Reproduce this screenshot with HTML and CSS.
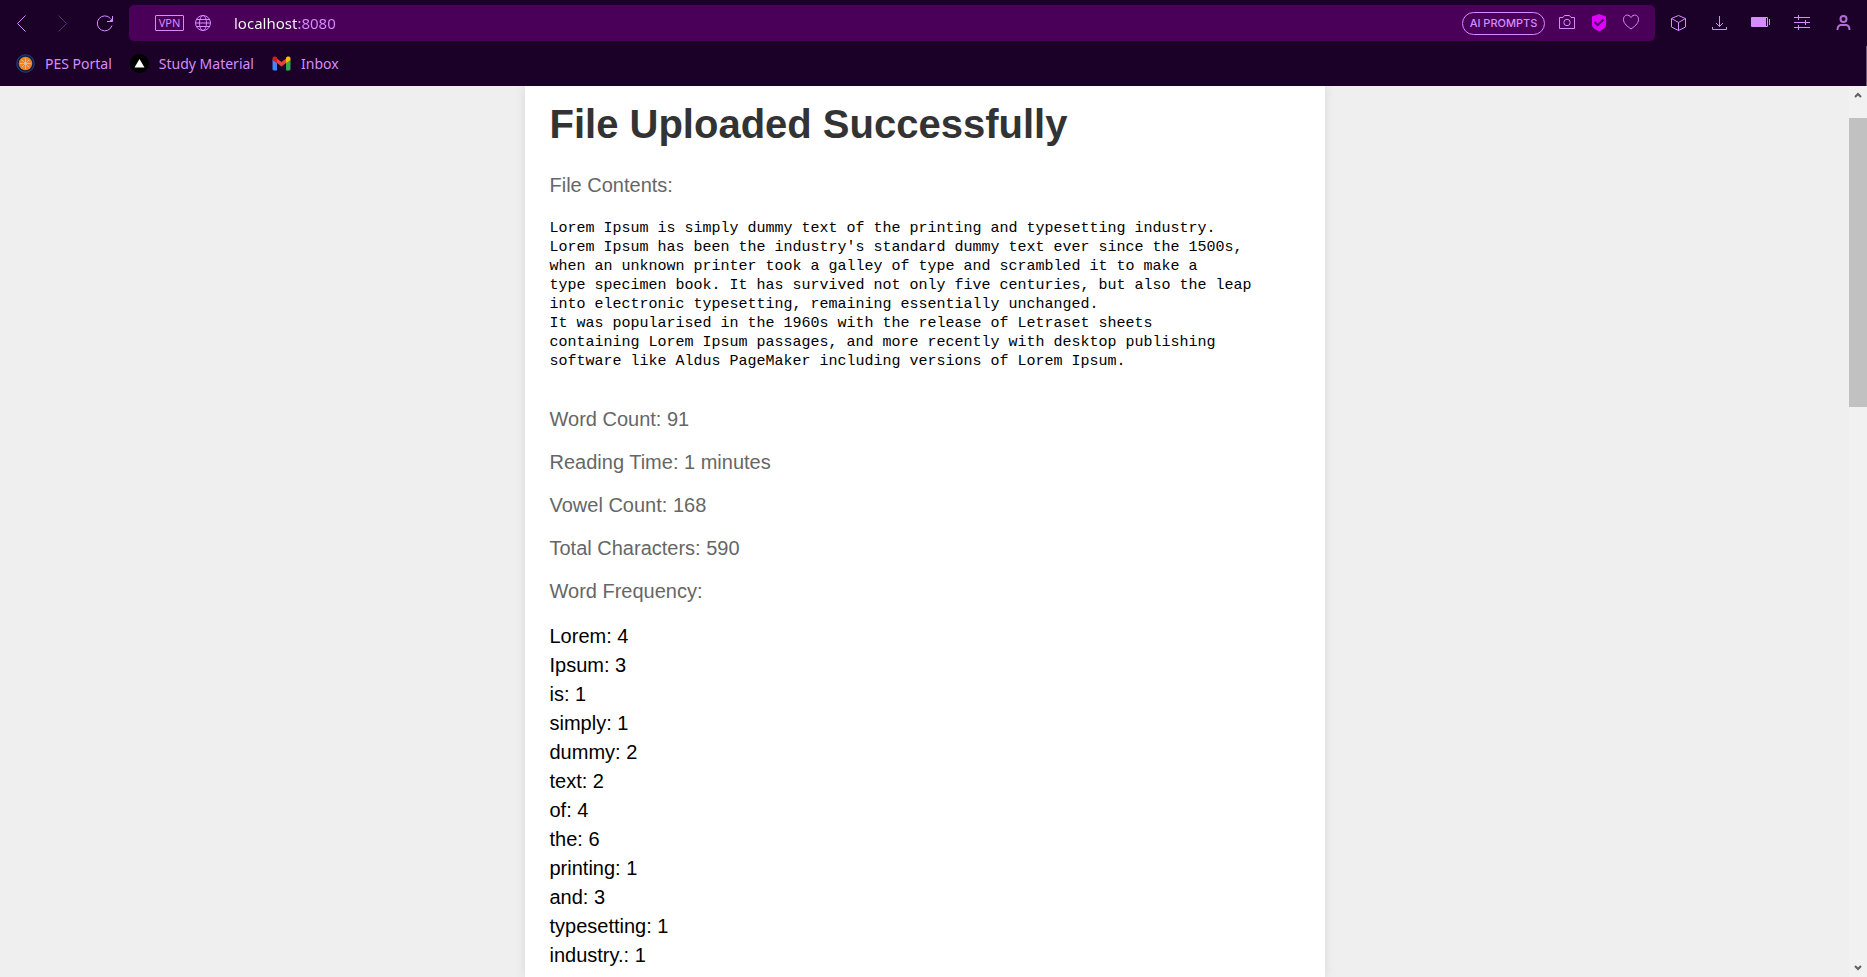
FILE: index.html
```html
<!DOCTYPE html>
<html lang="en">
<head>
<meta charset="utf-8">
<meta name="viewport" content="width=device-width, initial-scale=1">
<title>File Uploaded Successfully</title>
<link rel="stylesheet" href="styles.css">
</head>
<body>
<header class="browser">
  <div class="toolbar">
    <nav class="history" aria-label="History">
      <button class="icon-button" type="button" aria-label="Back"><svg viewBox="0 0 20 20"><path d="M14.5 2.500 6.500 10.500l8 8"/></svg></button>
      <button class="icon-button faded" type="button" aria-label="Forward"><svg viewBox="0 0 20 20"><path d="m5.500 2.500 8 8-8 8"/></svg></button>
      <button class="icon-button" type="button" aria-label="Reload"><svg viewBox="0 0 20 20"><path d="M17 12.500A7.500 7.500 0 1 1 15.500 5.500M17.500 3v5.500H12"/><path class="solid" d="M17.500 5v3.500H14z"/></svg></button>
    </nav>
    <div class="address">
      <button class="vpn" type="button">VPN</button>
      <button class="icon-button" type="button" aria-label="Site information"><svg viewBox="0 0 20 20"><circle cx="10" cy="10" r="7.500"/><ellipse cx="10" cy="10" rx="3.500" ry="7.500"/><path d="M3.500 6.500h13M2.500 10h15M3.500 13.500h13"/></svg></button>
      <input class="url" type="text" aria-label="Address" value="localhost:8080">
      <div class="address-tools">
        <button class="prompts" type="button">AI PROMPTS</button>
        <button class="icon-button" type="button" aria-label="Snapshot"><svg viewBox="0 0 20 20"><path d="M2.500 4.500H6L7.500 2.500h5L14 4.500h3.500v11h-15z"/><circle cx="10" cy="9.500" r="3.200"/></svg></button>
        <button class="icon-button" type="button" aria-label="Ad blocker"><svg viewBox="0 0 20 20"><path class="shield" d="m10 1 7 2.500v8.500q0 3-7 6.500-7-3.500-7-6.500V3.500z"/><path class="check" d="m5.500 9 3.200 3.200L14.500 6.500"/></svg></button>
        <button class="icon-button" type="button" aria-label="Add to bookmarks"><svg viewBox="0 0 20 20"><path d="M10 4.500C8 .8 2.500 1.300 2.500 6.500c0 4.300 4.500 7.300 7.500 9.500 3-2.200 7.500-5.200 7.500-9.500C17.500 1.300 12 .8 10 4.500z"/></svg></button>
      </div>
    </div>
    <div class="tools">
      <button class="icon-button" type="button" aria-label="Extensions"><svg viewBox="0 0 20 20"><path d="m9.500 2.500 7 3v8.500l-7 3.500-7-3.500V5.500zM2.500 5.500l7 4 7-4M9.500 9.500v8"/></svg></button>
      <button class="icon-button" type="button" aria-label="Downloads"><svg viewBox="0 0 20 20"><path d="M9.500 3v10.500M6 10l3.500 3.500L13 10M2.500 14v2.500h14V14"/></svg></button>
      <button class="icon-button" type="button" aria-label="Battery"><svg viewBox="0 0 20 20"><path class="solid" d="M1 4h14v10H1a1 1 0 0 1-1-1V5a1 1 0 0 1 1-1z"/><path d="M1 4.500h15.500v9H1M18.500 6v6"/></svg></button>
      <button class="icon-button" type="button" aria-label="Easy setup"><svg viewBox="0 0 20 20"><path d="M2 4.500h16M2 9.500h16M2 14.500h16M6.500 2v5M13.500 7v5M6.500 12v5"/></svg></button>
      <button class="icon-button" type="button" aria-label="Profile"><svg class="profile" viewBox="0 0 20 20"><circle cx="10.500" cy="6" r="3"/><path d="M4.500 17c0-2.500 1-4.500 3-5h6c2 .5 3 2.500 3 5"/></svg></button>
    </div>
  </div>
  <nav class="bookmarks" aria-label="Bookmarks">
    <a class="bookmark" href="#pes"><svg viewBox="0 0 19 19"><circle cx="9.500" cy="9.500" r="8.800" fill="#171b3c" stroke="#21437a"/><circle cx="9.500" cy="9.500" r="6.700" fill="#f58220"/><circle cx="9.500" cy="9.500" r="2.700" fill="#7d91b8"/><path d="M9.500 4v11M4 9.500h11M5.600 5.600l7.800 7.800M13.400 5.600l-7.800 7.800" stroke="#e8b88a"/></svg>PES Portal</a>
    <a class="bookmark" href="#study"><svg viewBox="0 0 19 19"><circle cx="9.500" cy="9.500" r="9.500" fill="#000"/><path d="m9.500 5 5 8.500h-10z" fill="#fff"/></svg>Study Material</a>
    <a class="bookmark" href="#inbox"><svg viewBox="0 0 19 19"><path d="M.5 5.500 5 8.500V16.500H2A1.500 1.500 0 0 1 .5 15z" fill="#4285f4"/><path d="M18.500 5.500 14 8.500V16.500h3a1.500 1.500 0 0 0 1.500-1.500z" fill="#34a853"/><path d="M5 4.500 9.500 8 14 4.500v4.500l-4.500 3.500L5 9z" fill="#ea4335"/><path d="M.5 6V4.500C.5 2.500 3 2 4.200 3L5 3.600V9z" fill="#c5221f"/><path d="M18.500 6V4.500C18.500 2.500 16 2 14.800 3l-.8.6V9z" fill="#fbbc04"/></svg>Inbox</a>
  </nav>
</header>
<div class="window">
  <main class="page">
    <article class="card">
      <h1 class="title">File Uploaded Successfully</h1>
      <p class="stat">File Contents:</p>
      <pre class="contents">Lorem Ipsum is simply dummy text of the printing and typesetting industry.
Lorem Ipsum has been the industry's standard dummy text ever since the 1500s,
when an unknown printer took a galley of type and scrambled it to make a
type specimen book. It has survived not only five centuries, but also the leap
into electronic typesetting, remaining essentially unchanged.
It was popularised in the 1960s with the release of Letraset sheets
containing Lorem Ipsum passages, and more recently with desktop publishing
software like Aldus PageMaker including versions of Lorem Ipsum.</pre>
      <p class="stat">Word Count: 91</p>
      <p class="stat">Reading Time: 1 minutes</p>
      <p class="stat">Vowel Count: 168</p>
      <p class="stat">Total Characters: 590</p>
      <p class="stat">Word Frequency:</p>
      <ul class="words">
        <li>Lorem: 4</li>
        <li>Ipsum: 3</li>
        <li>is: 1</li>
        <li>simply: 1</li>
        <li>dummy: 2</li>
        <li>text: 2</li>
        <li>of: 4</li>
        <li>the: 6</li>
        <li>printing: 1</li>
        <li>and: 3</li>
        <li>typesetting: 1</li>
        <li>industry.: 1</li>
      </ul>
    </article>
  </main>
  <div class="scrollbar">
    <button class="arrow" type="button" aria-label="Scroll up"><svg viewBox="0 0 8 6"><path d="m1 5 3-3 3 3"/></svg></button>
    <div class="track"><div class="thumb"></div></div>
    <button class="arrow" type="button" aria-label="Scroll down"><svg viewBox="0 0 8 6"><path d="m1 1 3 3 3-3"/></svg></button>
  </div>
</div>
</body>
</html>
```
FILE: styles.css
```css
* {
  box-sizing: border-box;
}

body {
  display: flex;
  flex-direction: column;
  height: 100vh;
  margin: 0;
  overflow: hidden;
  font-family: "Liberation Sans", Arial, sans-serif;
}

button {
  flex: none;
  padding: 0;
  border: 0;
  background: none;
  color: #d68cff;
}

/* Browser bars */
.browser {
  flex: none;
  background: #1b0027;
  font-family: "Noto Sans", "Open Sans", sans-serif;
  font-size: 14px;
}

.toolbar {
  display: flex;
  align-items: center;
  gap: 14px;
  padding: 5px 14px 5px 11px;
}

.history {
  display: flex;
  gap: 22px;
}

.tools {
  display: flex;
  gap: 21px;
}

.icon-button {
  width: 20px;
  height: 20px;
}

.icon-button svg {
  display: block;
  width: 20px;
  height: 20px;
  overflow: visible;
  fill: none;
  stroke: #d68cff;
}

.icon-button .solid {
  fill: #d68cff;
  stroke: none;
}

.icon-button .shield {
  fill: #df00ff;
  stroke: none;
}

.icon-button .check {
  stroke: #4a0059;
  stroke-width: 2;
}

.icon-button .profile {
  stroke: #b070d2;
  stroke-width: 2;
}

.faded {
  opacity: 0.35;
}

.address {
  display: flex;
  flex: 1;
  align-items: center;
  gap: 9px;
  height: 36px;
  padding: 0 14px 0 26px;
  border-radius: 5px;
  background: #4a0059;
}

.vpn {
  width: 29px;
  height: 16px;
  border: 1px solid #d68cff;
  border-radius: 1px;
  font-family: "Noto Sans", sans-serif;
  font-size: 11px;
  line-height: 14px;
}

.url {
  flex: 1;
  min-width: 0;
  padding: 0 0 0 12px;
  border: 0;
  outline: 0;
  background: linear-gradient(to right, #fff 77px, #d68cff 77px);
  -webkit-background-clip: text;
  background-clip: text;
  color: transparent;
  font-family: "Noto Sans", sans-serif;
  font-size: 15px;
}

.address-tools {
  display: flex;
  align-items: center;
  gap: 12px;
}

.prompts {
  width: 83px;
  height: 23px;
  border: 1px solid #d68cff;
  border-radius: 12px;
  font-family: Inter, sans-serif;
  font-size: 11px;
  font-weight: 500;
}

.bookmarks {
  display: flex;
  gap: 18px;
  height: 40px;
  padding: 0 16px 5px;
  border-right: 1px solid #6d5c75;
}

.bookmark {
  display: flex;
  align-items: center;
  gap: 10px;
  color: #d68cff;
  text-decoration: none;
}

.bookmark svg {
  width: 19px;
  height: 19px;
}

/* Page */
.window {
  display: flex;
  flex: 1;
  min-height: 0;
  background: #efefef;
}

.page {
  display: flex;
  flex: 1;
  justify-content: center;
  overflow: hidden;
}

.card {
  width: 100%;
  max-width: 800px;
  min-height: 100%;
  padding: 15px 25px;
  background: #fff;
  box-shadow: 0 0 10px rgba(0, 0, 0, 0.1);
}

.title {
  margin: 0 0 27px;
  color: #333;
  font-size: 40px;
  line-height: 46px;
}

.stat {
  margin: 0 0 20px;
  color: #666;
  font-size: 20px;
  line-height: 23px;
}

.contents {
  margin: 22px 0 37px;
  font-family: "Liberation Mono", monospace;
  font-size: 15px;
  line-height: 19px;
}

.words {
  display: grid;
  gap: 2px;
  margin: 0;
  padding: 0;
  list-style: none;
  font-size: 20px;
  line-height: 27px;
}

/* Scrollbar */
.scrollbar {
  display: flex;
  flex: none;
  flex-direction: column;
  width: 18px;
  background: #f1f1f1;
}

.arrow {
  display: grid;
  place-items: center;
  height: 18px;
}

.arrow svg {
  width: 8px;
  height: 6px;
  fill: none;
  stroke: #606060;
  stroke-width: 2;
}

.track {
  flex: 1;
  padding-top: 14px;
}

.thumb {
  height: 34.4%;
  background: #c1c1c1;
}
```
